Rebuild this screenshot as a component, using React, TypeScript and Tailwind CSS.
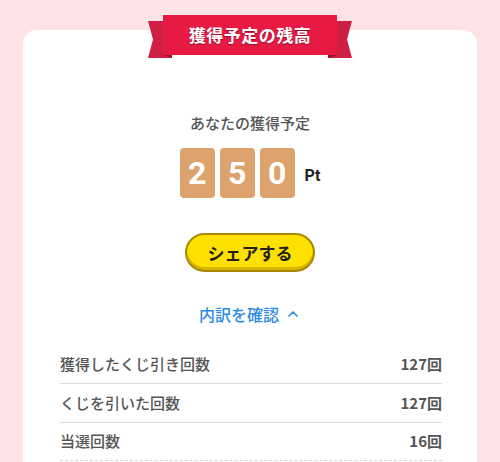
import React from "react";
import { ChevronUp } from "lucide-react";

const jp = { fontFamily: '"Noto Sans CJK JP", "Noto Sans", sans-serif' };

function Ribbon() {
  return (
    <div className="absolute left-[125px] top-[-15px] w-[204px] h-[43px]">
      <svg width="204" height="43" viewBox="0 0 204 43" className="absolute inset-0">
        <polygon points="0,6 24,6 24,43 0,43 5,24.5" fill="#cf1f44" />
        <polygon points="204,6 180,6 180,43 204,43 199,24.5" fill="#cf1f44" />
        <polygon points="15,40 24,40 24,43" fill="#9e1230" />
        <polygon points="189,40 180,40 180,43" fill="#9e1230" />
        <rect x="15" y="0" width="174" height="40" fill="#e61a43" />
      </svg>
      <div
        className="absolute left-[15px] top-0 w-[174px] h-[40px] flex items-center justify-center text-white font-bold text-[17px] tracking-[0.5px] [text-shadow:0_1px_1px_#8e0a26]"
        style={jp}
      >
        獲得予定の残高
      </div>
    </div>
  );
}

function Row({ label, value, dashed, pr }: { label: string; value: string; dashed?: boolean; pr?: string }) {
  return (
    <div
      className={`flex items-center justify-between border-b ${
        dashed ? "border-dashed border-[#d6d6d6] h-[38px]" : "border-[#dcdcdc] h-[39px]"
      }`}
    >
      <span className="text-[15px] font-medium text-[#555]">{label}</span>
      <span className={`text-[15px] font-bold text-[#555] ${pr ?? ""}`}>{value}</span>
    </div>
  );
}

export default function App() {
  return (
    <div className="w-[500px] h-[462px] bg-[#fee3e6] overflow-hidden pt-[30px] px-[23px]" style={jp}>
      <div className="relative bg-white rounded-t-[14px] h-[450px] pt-[82px]">
        <Ribbon />
        <div className="text-center text-[15px] leading-[22px] font-medium text-[#555]">あなたの獲得予定</div>
        <div className="flex justify-center items-end mt-[14px]">
          {["2", "5", "0"].map((d, i) => (
            <div
              key={i}
              className={`w-[35px] h-[50px] rounded-[4px] bg-[#dca36d] flex items-center justify-center text-white font-bold text-[32px] ${
                i > 0 ? "ml-[5px]" : ""
              }`}
              style={{ fontFamily: 'Roboto, "Liberation Sans", Arial, sans-serif' }}
            >
              {d}
            </div>
          ))}
          <span
            className="ml-[10px] mb-[10px] text-[16px] font-bold text-[#222]"
            style={{ fontFamily: 'Roboto, "Liberation Sans", Arial, sans-serif' }}
          >
            Pt
          </span>
        </div>
        <div className="flex justify-center mt-[35px]">
          <div className="w-[130px] h-[39px] rounded-full bg-[#ffe100] border-2 border-[#a88800] shadow-[inset_0_-3px_0_#d8b300] flex items-center justify-center text-[17px] font-bold text-[#222]">
            シェアする
          </div>
        </div>
        <div className="flex justify-center items-center mt-[30px] h-[24px] text-[16px] text-[#2c8ae2] font-medium">
          <span>内訳を確認</span>
          <ChevronUp size={16} strokeWidth={2.5} className="ml-[6px]" />
        </div>
        <div className="mt-[19px] ml-[37px] mr-[35px]">
          <Row label="獲得したくじ引き回数" value="127回" />
          <Row label="くじを引いた回数" value="127回" />
          <Row label="当選回数" value="16回" dashed />
        </div>
      </div>
    </div>
  );
}
